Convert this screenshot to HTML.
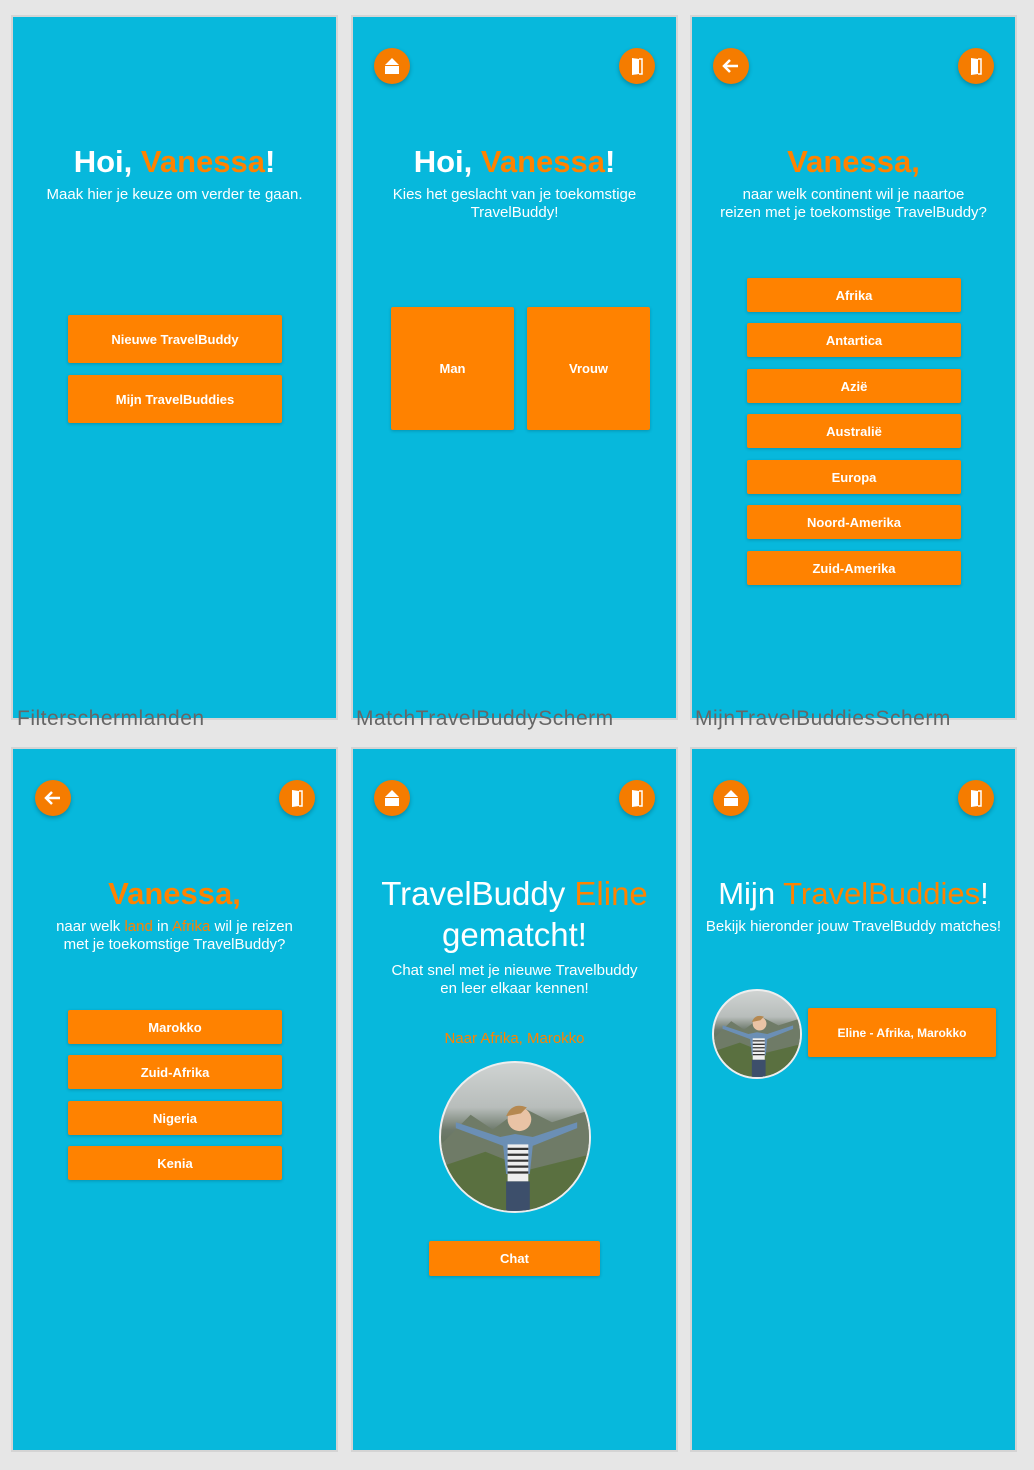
<!DOCTYPE html>
<html><head><meta charset="utf-8"><style>
*{margin:0;padding:0;box-sizing:border-box}
body{width:1034px;height:1470px;background:#e6e6e6;position:relative;overflow:hidden;font-family:"Liberation Sans",sans-serif}
.p{position:absolute;width:327px;height:705px;background:#07b8dc;border:2px solid #d4d4d4}
.t{position:absolute;left:0;width:100%;text-align:center;color:#fff}
.h{font-size:31px;font-weight:bold;line-height:40px}
.s{font-size:15px;line-height:18px}
.o{color:#ff8200}
.b{position:absolute;background:#ff8200;color:#fff;font-size:13px;font-weight:bold;display:flex;align-items:center;justify-content:center;box-shadow:0 1px 3px rgba(0,0,0,.2);border-radius:2px}
.ic{position:absolute;width:36px;height:36px;border-radius:50%;background:#f57c00;box-shadow:0 2px 4px rgba(0,0,0,.25)}
.lab{position:absolute;font-size:21px;color:#666;letter-spacing:.5px}
.ph{position:absolute;border-radius:50%;overflow:hidden;border:2px solid #eee;background:linear-gradient(#cfd3d2 0%,#b8bdbb 30%,#6e7a6c 45%,#5f6f55 60%,#7d8a5e 75%,#a8a58e 100%)}
</style></head><body>
<svg width="0" height="0" style="position:absolute"><defs>
<symbol id="home" viewBox="0 0 36 36"><path d="M18 10 L25 17 L11 17 Z M11 18 H25 V26 H11 Z" fill="#fff"/></symbol>
<symbol id="door" viewBox="0 0 36 36"><path d="M13 10 L20 11 V26 L13 27 Z" fill="#fff"/><path d="M20 11 H23 V26 H20" fill="none" stroke="#fff" stroke-width="1.5"/></symbol>
<symbol id="back" viewBox="0 0 36 36"><path d="M25 18 H12 M17 12 L11 18 L17 24" fill="none" stroke="#fff" stroke-width="2.5"/></symbol>
<symbol id="girl" viewBox="0 0 100 100"><path d="M0 55 L20 35 L35 45 L55 30 L75 40 L100 32 V100 H0 Z" fill="#6f7b67"/><path d="M0 70 L30 60 L60 72 L100 62 V100 H0Z" fill="#5a7040"/><path d="M10 40 L40 50 L50 48 L62 50 L92 40 L92 44 L62 56 L60 75 L44 75 L42 56 L10 44Z" fill="#6b8fb5"/><rect x="45" y="55" width="14" height="25" fill="#eee"/><path d="M45 58h14M45 62h14M45 66h14M45 70h14M45 74h14" stroke="#333" stroke-width="1.5"/><circle cx="53" cy="38" r="8" fill="#e9c3a5"/><path d="M44 36 Q48 26 58 30 L54 34Z" fill="#b58850"/><rect x="44" y="80" width="16" height="20" fill="#3d4f6b"/></symbol>
</defs></svg>

<div class="p" style="left:11px;top:15px">
<div class="t h" style="top:125px">Hoi, <span class="o">Vanessa</span>!</div>
<div class="t s" style="top:169px">Maak hier je keuze om verder te gaan.</div>
<div class="b" style="left:55px;top:298px;width:214px;height:48px">Nieuwe TravelBuddy</div>
<div class="b" style="left:55px;top:358px;width:214px;height:48px">Mijn TravelBuddies</div>
</div>
<div class="p" style="left:351px;top:15px">
<svg class="ic" style="left:21px;top:31px"><use href="#home"/></svg>
<svg class="ic" style="left:266px;top:31px"><use href="#door"/></svg>
<div class="t h" style="top:125px">Hoi, <span class="o">Vanessa</span>!</div>
<div class="t s" style="top:169px">Kies het geslacht van je toekomstige<br>TravelBuddy!</div>
<div class="b" style="left:38px;top:290px;width:123px;height:123px">Man</div>
<div class="b" style="left:174px;top:290px;width:123px;height:123px">Vrouw</div>
</div>
<div class="p" style="left:690px;top:15px">
<svg class="ic" style="left:21px;top:31px"><use href="#back"/></svg>
<svg class="ic" style="left:266px;top:31px"><use href="#door"/></svg>
<div class="t h o" style="top:125px">Vanessa,</div>
<div class="t s" style="top:169px">naar welk continent wil je naartoe<br>reizen met je toekomstige TravelBuddy?</div>
<div class="b" style="left:55px;top:261px;width:214px;height:34px">Afrika</div>
<div class="b" style="left:55px;top:306px;width:214px;height:34px">Antartica</div>
<div class="b" style="left:55px;top:352px;width:214px;height:34px">Azië</div>
<div class="b" style="left:55px;top:397px;width:214px;height:34px">Australië</div>
<div class="b" style="left:55px;top:443px;width:214px;height:34px">Europa</div>
<div class="b" style="left:55px;top:488px;width:214px;height:34px">Noord-Amerika</div>
<div class="b" style="left:55px;top:534px;width:214px;height:34px">Zuid-Amerika</div>
</div>
<div class="p" style="left:11px;top:747px">
<svg class="ic" style="left:22px;top:31px"><use href="#back"/></svg>
<svg class="ic" style="left:266px;top:31px"><use href="#door"/></svg>
<div class="t h o" style="top:125px">Vanessa,</div>
<div class="t s" style="top:169px">naar welk <span class="o">land</span> in <span class="o">Afrika</span> wil je reizen<br>met je toekomstige TravelBuddy?</div>
<div class="b" style="left:55px;top:261px;width:214px;height:34px">Marokko</div>
<div class="b" style="left:55px;top:306px;width:214px;height:34px">Zuid-Afrika</div>
<div class="b" style="left:55px;top:352px;width:214px;height:34px">Nigeria</div>
<div class="b" style="left:55px;top:397px;width:214px;height:34px">Kenia</div>
</div>
<div class="p" style="left:351px;top:747px">
<svg class="ic" style="left:21px;top:31px"><use href="#home"/></svg>
<svg class="ic" style="left:266px;top:31px"><use href="#door"/></svg>
<div class="t" style="top:124px;font-size:33px;line-height:41px">TravelBuddy <span class="o">Eline</span><br>gematcht!</div>
<div class="t s" style="top:213px">Chat snel met je nieuwe Travelbuddy<br>en leer elkaar kennen!</div>
<div class="t s o" style="top:281px">Naar Afrika, Marokko</div>
<svg class="ph" style="left:86px;top:312px;width:152px;height:152px"><use href="#girl" width="148" height="148"/></svg>
<div class="b" style="left:76px;top:492px;width:171px;height:35px">Chat</div>
</div>
<div class="p" style="left:690px;top:747px">
<svg class="ic" style="left:21px;top:31px"><use href="#home"/></svg>
<svg class="ic" style="left:266px;top:31px"><use href="#door"/></svg>
<div class="t" style="top:126px;font-size:31px;line-height:38px">Mijn <span class="o">TravelBuddies</span>!</div>
<div class="t s" style="top:169px">Bekijk hieronder jouw TravelBuddy matches!</div>
<svg class="ph" style="left:20px;top:240px;width:90px;height:90px"><use href="#girl" width="86" height="86"/></svg>
<div class="b" style="left:116px;top:259px;width:188px;height:49px;font-size:12px">Eline - Afrika, Marokko</div>
</div>

<div class="lab" style="left:17px;top:707px">Filterschermlanden</div>
<div class="lab" style="left:356px;top:707px">MatchTravelBuddyScherm</div>
<div class="lab" style="left:695px;top:707px">MijnTravelBuddiesScherm</div>
</body></html>
